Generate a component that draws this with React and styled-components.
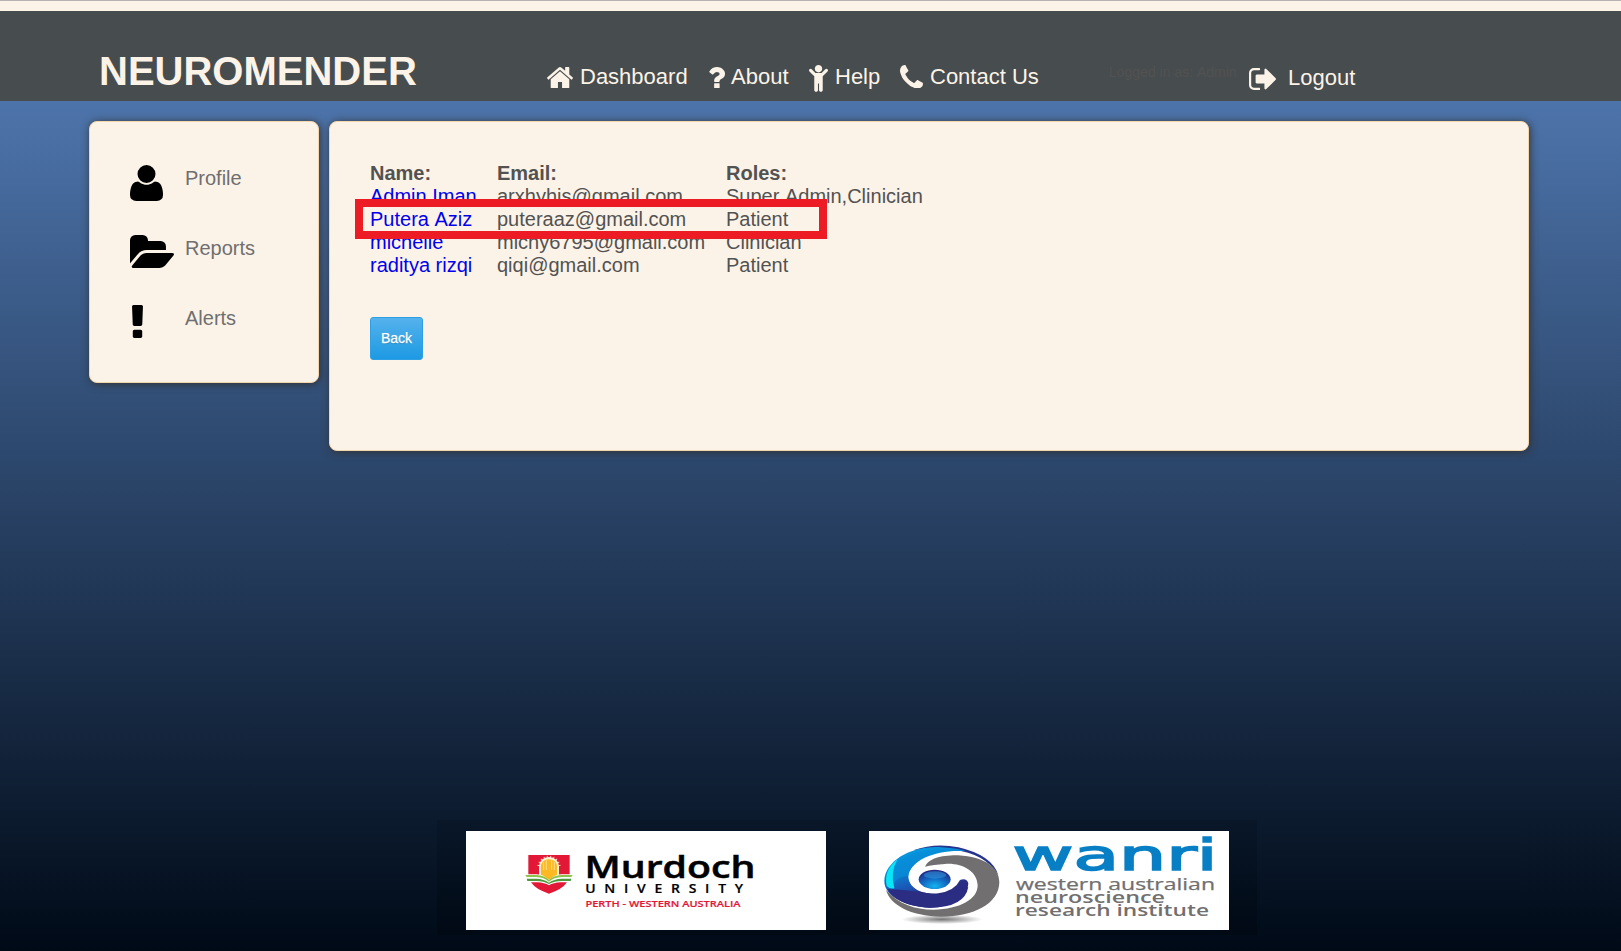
import React from "react";
import styled, { createGlobalStyle } from "styled-components";

const cream = "#fcf3e8";

const GlobalStyle = createGlobalStyle`
  * { box-sizing: border-box; }
  body {
    margin: 0;
    font-family: "Liberation Sans", Arial, sans-serif;
    font-kerning: none;
    color: #525252;
  }
`;

const Page = styled.div`
  display: flex;
  flex-direction: column;
  height: 951px;
  overflow: hidden;
  background: linear-gradient(#5078b2 0, #4d74ab 101px, #000a17 951px);
`;

const TopStripe = styled.div`
  flex: none;
  height: 11px;
  border-top: 1px solid #b6b1b3;
  background: ${cream};
`;

const HeaderBar = styled.header`
  flex: none;
  display: flex;
  align-items: flex-start;
  height: 90px;
  padding-left: 99px;
  background: #474c4e;
  color: ${cream};
`;

const Brand = styled.h1`
  width: 448px;
  margin: 37px 0 0;
  font-size: 40px;
  line-height: 46px;
  font-weight: bold;
`;

const Nav = styled.nav`
  display: flex;
  width: 562px;
  padding-top: 53px;
`;

const NavLink = styled.a`
  display: flex;
  align-items: flex-start;
  width: ${(p) => p.$width}px;
  height: 30px;
  font-size: 22px;
  line-height: 26px;
  white-space: nowrap;

  svg {
    flex: none;
    margin: ${(p) => p.$iconTop}px ${(p) => p.$gap}px 0 0;
  }
`;

const Session = styled.div`
  display: flex;
  padding-top: 54px;
`;

const SessionNote = styled.span`
  width: 140px;
  margin-top: -1px;
  font-size: 14px;
  line-height: 16px;
  color: #525252;
  white-space: nowrap;
`;

const Body = styled.div`
  display: flex;
  align-items: flex-start;
  gap: 10px;
  padding: 20px 92px 0 89px;
`;

const Panel = styled.section`
  position: relative;
  background: ${cream};
  border: 1px solid #f5d6a8;
  border-radius: 8px;
  box-shadow: 1px 1px 8px #333;
`;

const Sidebar = styled(Panel)`
  width: 230px;
  height: 262px;
  padding: 43px 40px 0;
`;

const Content = styled(Panel)`
  width: 1200px;
  height: 330px;
  padding: 40px 40px 0;
`;

const SideLink = styled.a`
  display: flex;
  align-items: flex-start;
  height: 70px;
  font-size: 20px;
  color: #6f6f6f;
`;

const SideIcon = styled.span`
  width: 55px;
  height: 36px;
  padding-left: ${(p) => p.$indent || 0}px;
  color: #000;

  svg { display: block; }
`;

const SideText = styled.span`
  margin-top: 2px;
  line-height: 23px;
`;

const UserTable = styled.div`
  display: grid;
  grid-template-columns: 127px 229px 1fr;
  font-size: 20px;
  line-height: 23px;
`;

const HeadCell = styled.span`
  font-weight: bold;
`;

const NameLink = styled.a`
  color: #0000ee;
`;

const Highlight = styled.div`
  position: absolute;
  left: 25px;
  top: 77px;
  width: 472px;
  height: 40px;
  border: 8px solid #ed1c24;
`;

const BackButton = styled.button`
  display: block;
  width: 53px;
  height: 43px;
  margin-top: 40px;
  padding: 0 0 2px;
  border: 1px solid #2f9fe5;
  border-radius: 3px;
  background: linear-gradient(#55b2ec, #1d9ae3);
  color: #fff;
  font: 14px "Liberation Sans", Arial, sans-serif;
  -webkit-text-stroke: 0.25px #fff;
  text-shadow: 0 1px 1px rgba(0, 0, 0, 0.2);
`;

const Footer = styled.footer`
  display: flex;
  align-items: flex-start;
  gap: 43px;
  width: 820px;
  height: 115px;
  margin: auto 0 16px 437px;
  padding: 11px 0 0 29px;
  background: linear-gradient(#091729, #000914);
`;

const LogoCard = styled.div`
  width: 360px;
  height: 99px;
  background: #fff;

  svg { display: block; }
`;

/* Icon outlines use font units; flip draws the ones whose y axis points up. */
function Icon({ box, w, h, d, flip }) {
  return (
    <svg width={w} height={h} viewBox={box} preserveAspectRatio="none" fill="currentColor">
      <path d={d} transform={flip ? "scale(1,-1)" : undefined} />
    </svg>
  );
}

const icons = {
  home: {
    box: "89 253 1614 1283", w: 26, h: 21.5,
    d: "M1472 992v480q0 26-19 45t-45 19h-384v-384h-256v384h-384q-26 0-45-19t-19-45v-480q0-1 .5-3t.5-3l575-474 575 474q1 2 1 6zm223-69l-62 74q-8 9-21 11h-3q-13 0-21-7l-692-577-692 577q-12 8-24 7-13-2-21-11l-62-74q-8-10-7-23.5t11-21.5l719-599q32-26 76-26t76 26l244 204v-195q0-14 9-23t23-9h192q14 0 23 9t9 23v408l219 182q10 8 11 21.5t-7 23.5z",
  },
  question: {
    box: "466 256 938 1280", w: 16, h: 21.5,
    d: "M1088 1256v240q0 16-12 28t-28 12h-240q-16 0-28-12t-12-28v-240q0-16 12-28t28-12h240q16 0 28 12t12 28zm316-600q0 54-15.5 101t-35 76.5-55 59.5-57.5 43.5-61 35.5q-41 23-68.5 65t-27.5 67q0 17-12 32.5t-28 15.5h-240q-15 0-25.5-18.5t-10.5-37.5v-45q0-83 65-156.5t143-108.5q59-27 84-56t25-76q0-42-46.5-74t-107.5-32q-65 0-108 29-35 25-107 115-13 16-31 16-12 0-25-8l-164-125q-13-10-15.5-25t5.5-28q160-266 464-266 80 0 161 31t146 83 106 127.5 41 158.5z",
  },
  child: {
    box: "64 -1376 1152 1632", w: 19, h: 27, flip: true,
    d: "M1188 988l-292-292v-824q0-46-33-79t-79-33-79 33-33 79v384h-64v-384q0-46-33-79t-79-33-79 33-33 79v824l-292 292q-28 28-28 68t28 68q29 28 68.500 28t67.500-28l228-228h368l228 228q28 28 68 28t68-28q28-29 28-68.500t-28-67.500zM864 1152q0-93-65.500-158.500t-158.500-65.500-158.500 65.500-65.500 158.500 65.500 158.500 158.500 65.500 158.500-65.500 65.500-158.500z",
  },
  phone: {
    box: "192 128 1408 1408", w: 23, h: 23.5,
    d: "M1600 1240q0 27-10 70.500t-21 68.500q-21 50-122 106-94 51-186 51-27 0-52.500-3.500t-57.500-12.500-47.500-14.500-55.500-20.500-49-18q-98-35-175-83-128-79-264.500-215.500t-215.500-264.500q-48-77-83-175-3-9-18-49t-20.500-55.500-14.500-47.500-12.500-57.500-3.500-52.500q0-92 51-186 56-101 106-122 25-11 68.500-21t70.500-10q14 0 21 3 18 6 53 76 11 19 30 54t35 63.500 31 53.500q3 4 17.500 25t21.500 35.500 7 28.500q0 20-28.500 50t-62 55-62 53-28.500 46q0 9 5 22.500t8.500 20.500 14 24 11.500 19q76 137 174 235t235 174q2 1 19 11.500t24 14 20.500 8.500 22.500 5q18 0 46-28.500t53-62 55-62 50-28.500q14 0 28.500 7t35.500 21.500 25 17.500q25 15 53.500 31t63.500 35 54 30q70 35 76 53 3 7 3 21z",
  },
  signOut: {
    box: "64 256 1568 1280", w: 27, h: 22,
    d: "M704 1440q0 4 1 20t.5 26.500-3 23.500-10 19.500-20.500 6.500h-320q-119 0-203.500-84.500t-84.500-203.500v-704q0-119 84.500-203.500t203.500-84.500h320q13 0 22.500 9.500t9.500 22.500q0 4 1 20t.5 26.500-3 23.500-10 19.500-20.500 6.500h-320q-66 0-113 47t-47 113v704q0 66 47 113t113 47h312l11.500 1 11.500 3 8 5.500 7 9 2 13.500zm928-544q0 26-19 45l-544 544q-19 19-45 19t-45-19-19-45v-288h-448q-26 0-45-19t-19-45v-384q0-26 19-45t45-19h448v-288q0-26 19-45t45-19 45 19l544 544q19 19 19 45z",
  },
  user: {
    box: "0 -1408 1408 1536", w: 33, h: 36, flip: true,
    d: "M1408 131q0-120-73-189.500t-194-69.500h-874q-121 0-194 69.500t-73 189.500q0 53 3.500 103.500t14 109 26.500 108.500 43 97.500 62 81 85.500 53.500 111.500 20q9 0 42-21.500t74.500-48 108-48 133.500-21.500 133.500 21.500 108 48 74.500 48 42 21.500q61 0 111.500-20t85.500-53.500 62-81 43-97.500 26.500-108.500 14-109 3.500-103.500zM1088 1024q0-159-112.500-271.500t-271.500-112.500-271.500 112.500-112.500 271.500 112.500 271.500 271.500 112.500 271.500-112.500 112.500-271.500z",
  },
  folder: {
    box: "-64 128 1880 1408", w: 44, h: 33,
    d: "M1815 952q0 31-31 66l-336 396q-43 51-120.500 86.500t-143.500 35.500h-1088q-34 0-60.500-13t-26.500-43q0-31 31-66l336-396q43-51 120.500-86.500t143.500-35.500h1088q34 0 60.500 13t26.500 43zm-343-344v160h-832q-94 0-197 47.500t-164 119.500l-337 396-5 6q0-4-.5-12.500t-.5-12.500v-960q0-92 66-158t158-66h320q92 0 158 66t66 158v32h544q92 0 158 66t66 158z",
  },
  exclamation: {
    box: "672 128 448 1408", w: 11, h: 33,
    d: "M1088 1248v224q0 26-19 45t-45 19h-256q-26 0-45-19t-19-45v-224q0-26 19-45t45-19h256q26 0 45 19t19 45zm30-1056l-28 768q-1 26-20.500 45t-45.500 19h-256q-26 0-45.500-19t-20.500-45l-28-768q-1-26 17.500-45t44.500-19h320q26 0 44.500 19t17.500 45z",
  },
};

const navItems = [
  { icon: "home", label: "Dashboard", width: 162, gap: 7, top: 2.5 },
  { icon: "question", label: "About", width: 100, gap: 6, top: 2.5 },
  { icon: "child", label: "Help", width: 91, gap: 7, top: 1 },
  { icon: "phone", label: "Contact Us", width: 150, gap: 7, top: 0.5 },
];

const sideItems = [
  { icon: "user", label: "Profile" },
  { icon: "folder", label: "Reports" },
  { icon: "exclamation", label: "Alerts", indent: 2 },
];

const users = [
  ["Admin Iman", "arxhyhis@gmail.com", "Super Admin,Clinician"],
  ["Putera Aziz", "puteraaz@gmail.com", "Patient"],
  ["michelle", "michy6795@gmail.com", "Clinician"],
  ["raditya rizqi", "qiqi@gmail.com", "Patient"],
];

function MurdochLogo() {
  const rays = [-80, -62, -44, -26, -9, 9, 26, 44, 62, 80];
  return (
    <svg width="360" height="99" viewBox="0 0 360 99" fontFamily="'Open Sans', sans-serif">
      <g transform="translate(-46 -21) scale(0.33333)">
        <path d="M325 135H449V196Q415 196 387 209Q359 196 325 196Z" fill="#e31837" />
        {rays.map((a) => (
          <path key={a} d="M387 148V137" stroke="#fbd9c0" strokeWidth="3" transform={`rotate(${a} 387 172)`} />
        ))}
        <path d="M357 202V170Q359 143 387 141Q415 143 417 170V202L387 213Z" fill="#fff3cf" />
        <path d="M363 198V166Q366 149 387 148Q408 149 411 166V198L387 210Z" fill="#fdb924" />
        <path d="M371 156V200M379 151V205M395 151V205M403 156V200" stroke="#fff0b8" strokeWidth="2" />
        <path d="M314 193H350Q374 195 387 208Q400 195 424 193H460L452 218H322Z" fill="#fff" />
        <path d="M363 192V180H411V192L387 210Z" fill="#fdb924" />
        <path d="M316 195H350Q374 197 387 210Q400 197 424 195H458L454 201H425Q402 202 387 215Q372 202 349 201H320Z" fill="#8bc34a" />
        <path d="M320 206H349Q372 207 387 218Q402 207 425 206H454L452 213H425Q403 213 387 222Q371 213 349 213H322Z" fill="#4f9a3d" />
        <path d="M333 217H352Q374 218 387 226Q400 218 422 217H441Q426 239 387 251Q348 239 333 217Z" fill="#e31837" />
      </g>
      <text x="118.500" y="46.800" fontSize="30.500" fontWeight="600" textLength="171" lengthAdjust="spacingAndGlyphs" stroke="#000" strokeWidth=".5">Murdoch</text>
      <text x="106.400" y="62.500" fontSize="12.500" fontWeight="600" textLength="141" stroke="#000" strokeWidth=".2" transform="scale(1.12 1)">UNIVERSITY</text>
      <text x="119.500" y="76" fontSize="9.700" fontWeight="600" fill="#e31837" stroke="#e31837" strokeWidth=".2" textLength="155" lengthAdjust="spacingAndGlyphs">PERTH - WESTERN AUSTRALIA</text>
    </svg>
  );
}

function WanriLogo() {
  return (
    <svg width="360" height="99" viewBox="0 0 360 99" fontFamily="'Open Sans', sans-serif">
      <defs>
        <linearGradient id="ring" x1="0" y1="0" x2="0.35" y2="1">
          <stop offset="0" stopColor="#06a6e6" />
          <stop offset="0.45" stopColor="#0a7fd0" />
          <stop offset="0.72" stopColor="#1d4fb0" />
          <stop offset="0.8" stopColor="#2a2e85" />
          <stop offset="1" stopColor="#2a2a80" />
        </linearGradient>
        <radialGradient id="eye" cx="0.5" cy="0.85" r="0.75">
          <stop offset="0" stopColor="#12b4f0" />
          <stop offset="0.55" stopColor="#1266c0" />
          <stop offset="1" stopColor="#252c86" />
        </radialGradient>
        <radialGradient id="ground">
          <stop offset="0" stopColor="#777" />
          <stop offset="1" stopColor="#777" stopOpacity="0" />
        </radialGradient>
      </defs>
      <g transform="translate(-19 -21) scale(0.33333)">
        <ellipse cx="276" cy="328" rx="122" ry="14" fill="url(#ground)" />
        <path d="M190 121Q255 97 325 112Q425 135 445 195Q405 130 310 119Q245 113 190 121Z" fill="#26348e" />
        <path d="M103 213C105 150 190 105 275 112Q325 115 350 124C270 116 180 146 175 200C178 238 220 254 265 250Q315 242 330 210Q350 203 355 220C352 265 300 294 240 293C170 291 103 261 103 213Z" fill="url(#ring)" />
        <path d="M110 228Q100 180 143 148Q120 185 133 235Q120 238 110 228Z" fill="#08e5f6" />
        <path d="M132 218Q118 155 195 128Q285 112 320 121C250 121 178 147 175 197Q145 200 132 218Z" fill="#078ed8" opacity=".65" />
        <path d="M112 237Q170 239 215 247Q300 265 355 230Q345 292 240 293C175 291 127 265 112 237Z" fill="#2b2d82" />
        <path d="M225 170Q238 139 310 136C390 136 448 165 448 217C447 282 370 320 275 320C180 318 121 285 108 240C145 282 195 299 250 299C330 298 383 268 383 226C382 183 335 158 285 162Q250 164 225 170Z" fill="#716f70" />
        <ellipse cx="254" cy="208" rx="48" ry="29" fill="url(#eye)" />
        <ellipse cx="255" cy="195" rx="34" ry="11" fill="#2d9be0" opacity=".55" />
      </g>
      <text x="143.500" y="39.300" fontSize="43.500" fontFamily="'DejaVu Sans', sans-serif" fill="#087fc5" stroke="#087fc5" strokeWidth="1.600" textLength="205" lengthAdjust="spacingAndGlyphs">wanri</text>
      <g fill="#716f70" fontSize="16.200">
        <text x="147" y="58.600" textLength="199" lengthAdjust="spacingAndGlyphs" stroke="#716f70" strokeWidth=".25">western australian</text>
        <text x="146" y="72" fontWeight="600" textLength="150" lengthAdjust="spacingAndGlyphs">neuroscience</text>
        <text x="146" y="85.300" fontWeight="600" textLength="194" lengthAdjust="spacingAndGlyphs">research institute</text>
      </g>
    </svg>
  );
}

export default function App() {
  return (
    <Page>
      <GlobalStyle />
      <TopStripe />
      <HeaderBar>
        <Brand>NEUROMENDER</Brand>
        <Nav>
          {navItems.map((n) => (
            <NavLink key={n.label} $width={n.width} $gap={n.gap} $iconTop={n.top}>
              <Icon {...icons[n.icon]} />
              {n.label}
            </NavLink>
          ))}
        </Nav>
        <Session>
          <SessionNote>Logged in as: Admin</SessionNote>
          <NavLink $gap={12} $iconTop={2.5}>
            <Icon {...icons.signOut} />
            Logout
          </NavLink>
        </Session>
      </HeaderBar>
      <Body>
        <Sidebar>
          {sideItems.map((s) => (
            <SideLink key={s.label}>
              <SideIcon $indent={s.indent}>
                <Icon {...icons[s.icon]} />
              </SideIcon>
              <SideText>{s.label}</SideText>
            </SideLink>
          ))}
        </Sidebar>
        <Content>
          <UserTable>
            <HeadCell>Name:</HeadCell>
            <HeadCell>Email:</HeadCell>
            <HeadCell>Roles:</HeadCell>
            {users.map(([name, email, roles]) => (
              <React.Fragment key={email}>
                <NameLink>{name}</NameLink>
                <span>{email}</span>
                <span>{roles}</span>
              </React.Fragment>
            ))}
          </UserTable>
          <Highlight />
          <BackButton>Back</BackButton>
        </Content>
      </Body>
      <Footer>
        <LogoCard><MurdochLogo /></LogoCard>
        <LogoCard><WanriLogo /></LogoCard>
      </Footer>
    </Page>
  );
}
